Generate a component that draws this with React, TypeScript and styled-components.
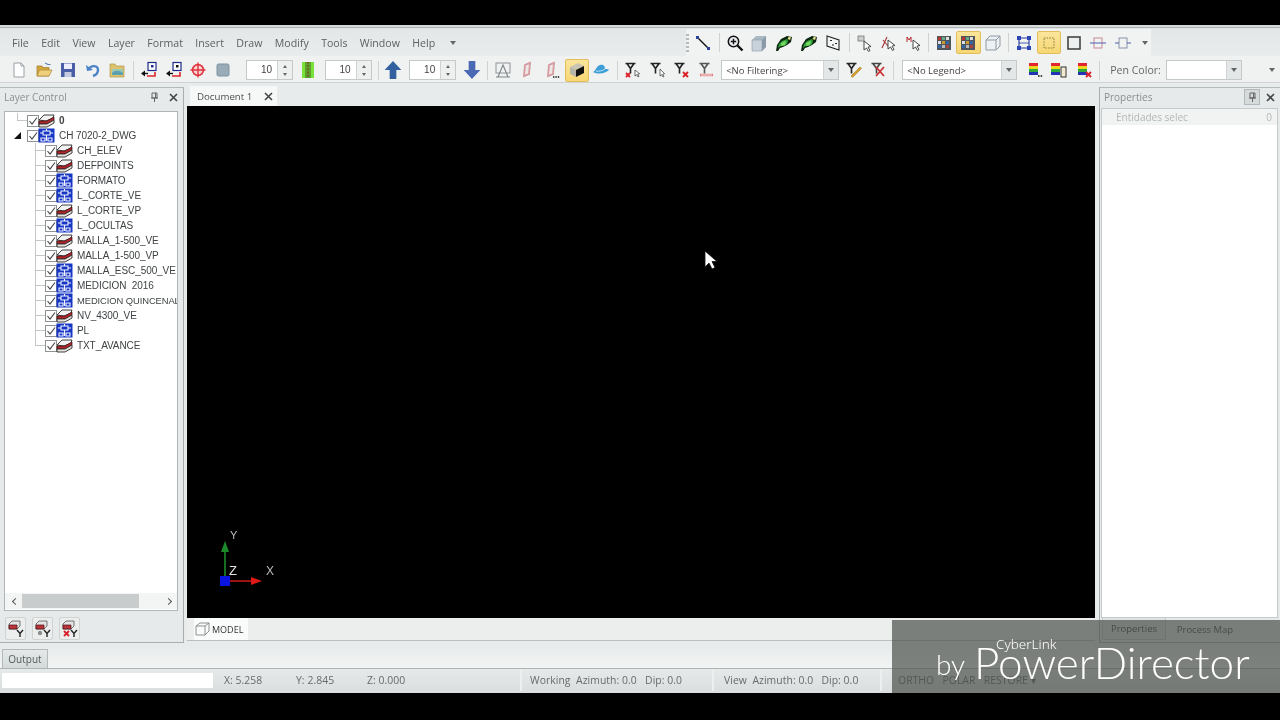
import React from "react";
import styled, { createGlobalStyle } from "styled-components";

const GlobalStyle = createGlobalStyle`
  html, body {
    margin: 0;
    padding: 0;
    background: #000;
    overflow: hidden;
  }
  * { box-sizing: border-box; }
`;

const uiFont = `"Open Sans", "Liberation Sans", sans-serif`;

/* ---------- icons ---------- */

const Svg: React.FC<{ children: React.ReactNode; size?: number }> = ({ children, size = 18 }) => (
  <svg width={size} height={size} viewBox="0 0 18 18" fill="none">
    {children}
  </svg>
);

const LineIcon = () => (
  <Svg>
    <path d="M3 3l12 12" stroke="#111" strokeWidth="1.4" />
    <rect x="2" y="2" width="3" height="3" fill="#2b3f9e" />
    <rect x="13" y="13" width="3" height="3" fill="#2b3f9e" />
  </Svg>
);
const ZoomIcon = () => (
  <Svg>
    <circle cx="7.5" cy="7.5" r="5.2" fill="#e8eef2" stroke="#111" strokeWidth="1.5" />
    <path d="M11.5 11.5l5 5" stroke="#111" strokeWidth="2.4" />
    <path d="M4.8 7.5h5.4M7.5 4.8v5.4" stroke="#111" strokeWidth="1.4" />
  </Svg>
);
const CubeIcon = () => (
  <Svg>
    <path d="M6 2h10v11l-4 4H2V6z" fill="#aab8c4" />
    <path d="M2 6h10v11H2z" fill="#c7d2da" stroke="#8c9aa6" strokeWidth=".6" />
    <path d="M12 6l4-4v11l-4 4z" fill="#8b9aa8" />
  </Svg>
);
const RunnerIcon = () => (
  <Svg>
    <path d="M1 17l1-6 4-6 6-3 5 1-1 5-4 3-4 2-3 1-2 3z" fill="#0c2410" />
    <path d="M3 14l1-4 3-3 5-2 1 2-1 3-3 2-3 0z" fill="#2fa33a" />
    <path d="M6 9l4-2 1 1-1 3-4 1z" fill="#74d85e" />
    <path d="M12.5 5l1.5-2.5 2 1-1 2.5z" fill="#e4e08a" />
  </Svg>
);
const CursorBoxIcon = () => (
  <Svg>
    <path d="M3 2l12 4v10L3 12z" fill="#f4f6f6" stroke="#222" strokeWidth="1.1" />
    <path d="M6 6.5h2M11 9.5h2M8 11h2" stroke="#222" strokeWidth="1.1" />
  </Svg>
);
const GridCursorIcon = () => (
  <Svg>
    <rect x="2" y="2" width="6" height="5" fill="#ccc" stroke="#777" strokeWidth=".8" />
    <path d="M8 7l0 9 2.5-2 2 3.5 1.5-1-2-3.4 3-.6z" fill="#fff" stroke="#333" strokeWidth=".9" />
  </Svg>
);
const SnapCursorIcon = () => (
  <Svg>
    <path d="M2 14L7 3M3 6l5 6" stroke="#a4323a" strokeWidth="1.1" />
    <path d="M8 6l0 9 2.5-2 2 3.5 1.5-1-2-3.4 3-.6z" fill="#fff" stroke="#333" strokeWidth=".9" />
  </Svg>
);
const MarkCursorIcon = () => (
  <Svg>
    <path d="M2 8V3l2 3 2-3v5" stroke="#b3262f" strokeWidth="1" />
    <path d="M8 6l0 9 2.5-2 2 3.5 1.5-1-2-3.4 3-.6z" fill="#fff" stroke="#333" strokeWidth=".9" />
  </Svg>
);
const PaletteIcon = () => (
  <Svg>
    <rect x="2" y="2" width="14" height="14" fill="#50555a" />
    <rect x="3" y="3" width="3" height="3" fill="#b33" />
    <rect x="7" y="3" width="3" height="3" fill="#6a8" />
    <rect x="11" y="3" width="3" height="3" fill="#ddd" />
    <rect x="3" y="7" width="3" height="3" fill="#ddd" />
    <rect x="7" y="7" width="3" height="3" fill="#c93" />
    <rect x="11" y="7" width="3" height="3" fill="#36a" />
    <rect x="3" y="11" width="3" height="3" fill="#36a" />
    <rect x="7" y="11" width="3" height="3" fill="#bbb" />
    <rect x="11" y="11" width="3" height="3" fill="#a44" />
  </Svg>
);
const WireCubeIcon = () => (
  <Svg>
    <path d="M2 6h10v10H2zM2 6l4-4h10v10l-4 4M12 6l4-4" stroke="#8d9aa6" strokeWidth="1" fill="#edf1f3" />
  </Svg>
);
const HandlesIcon = () => (
  <Svg>
    <path d="M4 4h10v10H4z" stroke="#26389a" strokeWidth="1.1" />
    <path d="M4 9h10" stroke="#26389a" strokeWidth=".8" />
    <rect x="2" y="2" width="4" height="4" fill="#2c44b8" />
    <rect x="12" y="2" width="4" height="4" fill="#2c44b8" />
    <rect x="2" y="12" width="4" height="4" fill="#2c44b8" />
    <rect x="12" y="12" width="4" height="4" fill="#2c44b8" />
  </Svg>
);
const DashSquareIcon = () => (
  <Svg>
    <rect x="4" y="4" width="10" height="10" stroke="#8a7a40" strokeDasharray="1.5 1.2" />
  </Svg>
);
const ThickSquareIcon = () => (
  <Svg>
    <rect x="3" y="3" width="12" height="12" fill="#edf0f0" stroke="#444" strokeWidth="1.6" />
  </Svg>
);
const LineRectIcon = () => (
  <Svg>
    <rect x="5" y="4" width="8" height="10" stroke="#c0808a" strokeWidth=".9" />
    <path d="M1 9h16" stroke="#4a5cb0" strokeWidth="1" />
  </Svg>
);
const SmallRectIcon = () => (
  <Svg>
    <rect x="5" y="4" width="8" height="10" stroke="#8893a8" strokeWidth="1" />
    <path d="M1 9h4M13 9h4" stroke="#4a5cb0" strokeWidth="1" />
  </Svg>
);
const NewIcon = () => (
  <Svg>
    <path d="M4 2h7l3 3v11H4z" fill="#fff" stroke="#9aa0a6" />
    <path d="M11 2v3h3" stroke="#9aa0a6" />
  </Svg>
);
const OpenIcon = () => (
  <Svg>
    <path d="M2 5h5l1 1.5h6V15H2z" fill="#d6a63e" stroke="#9c7826" strokeWidth=".7" />
    <path d="M2 15l2.5-6H17l-3 6z" fill="#efcf7c" stroke="#a98630" strokeWidth=".7" />
    <path d="M10 2l3 1.5 2.5 0" stroke="#5c7db8" strokeWidth="1.1" />
  </Svg>
);
const SaveIcon = () => (
  <Svg>
    <path d="M2 2h14v14H2z" fill="#4a5ea8" />
    <rect x="5" y="2.5" width="8" height="5.5" fill="#eef" />
    <rect x="5.5" y="11" width="7" height="5" fill="#c4cbe0" />
  </Svg>
);
const UndoIcon = () => (
  <Svg>
    <path d="M5 8c2-4 9-4 9 1 0 3-2 5-5 6" stroke="#4c83c6" strokeWidth="2.4" />
    <path d="M2 4l1 6 6-1z" fill="#4c83c6" />
  </Svg>
);
const LandscapeFolderIcon = () => (
  <Svg>
    <path d="M2 3h5l1 2h8v11H2z" fill="#dcc26a" stroke="#b09a4e" strokeWidth=".7" />
    <path d="M4 8h11v6H4z" fill="#9cc9b6" />
    <path d="M4 12c3-3 7-3 11 0v2H4z" fill="#5aa0b0" />
  </Svg>
);
const InsertIcon: React.FC<{ dark?: boolean }> = ({ dark }) => (
  <Svg>
    <rect x="8" y="1.5" width="8" height="8" fill="#fff" stroke="#1d2a88" strokeWidth="1.2" />
    <rect x="11" y="4" width="2.5" height="2.5" fill={dark ? "#111" : "#1d2a88"} />
    <path d="M7 15h8v-4" stroke="#e0242a" strokeWidth="1.6" />
    <path d="M1 12.5l4-3v6z" fill="#111" />
    <path d="M5 12.5h3" stroke="#111" strokeWidth="1.4" />
  </Svg>
);
const TargetIcon = () => (
  <Svg>
    <circle cx="9" cy="9" r="5.4" stroke="#e0343c" strokeWidth="1.6" fill="#f9d6d6" />
    <path d="M1.5 9h15M9 1.5v15" stroke="#e0343c" strokeWidth="1.4" />
  </Svg>
);
const GraySquareIcon = () => (
  <Svg>
    <rect x="3" y="3" width="12" height="12" rx="1.5" fill="#9aabb8" stroke="#7d93a2" />
  </Svg>
);
const GreenBarIcon = () => (
  <Svg>
    <rect x="3" y="1" width="12" height="16" fill="#7ce03a" />
    <rect x="6" y="1" width="6" height="16" fill="#5aa02c" />
    <path d="M9 1v16" stroke="#8a3020" strokeWidth="1.2" strokeDasharray="1.6 1.6" />
  </Svg>
);
const UpArrowIcon = () => (
  <Svg size={20}>
    <path d="M9 1l7.5 8H12v8H6V9H1.5z" fill="#33609e" />
  </Svg>
);
const DownArrowIcon = () => (
  <Svg size={20}>
    <path d="M9 17l7.5-8H12V1H6v8H1.5z" fill="#4a68b4" />
  </Svg>
);
const TextFrameIcon = () => (
  <Svg>
    <rect x="2" y="2" width="14" height="10" fill="#f0f2f2" stroke="#8e9498" />
    <path d="M4 16L9 4l5 12M2 16h14" stroke="#7e8488" strokeWidth="1.1" />
  </Svg>
);
const PlateIcon: React.FC<{ dots?: boolean }> = ({ dots }) => (
  <Svg>
    <path d="M5 15l1-11 5-2-1 11z" stroke="#d49aa2" strokeWidth="1.8" fill="#f1e6e6" />
    {dots && <path d="M10 16h1.4M12.4 16h1.4M14.8 16h1.4" stroke="#111" strokeWidth="1.4" />}
  </Svg>
);
const SolidCubeIcon = () => (
  <Svg>
    <path d="M2 6l8-4 6 3-8 4z" fill="#c9c5b4" />
    <path d="M2 6l6 3v7l-6-3z" fill="#b7b5a8" />
    <path d="M8 9l8-4v7l-8 4z" fill="#111" />
  </Svg>
);
const HatIcon = () => (
  <Svg>
    <path d="M1 11c3-1 3-6 7-7 4-1 5 2 5 4 2 0 4 0 4 1-3 3-10 5-16 2z" fill="#3e9ed8" />
    <path d="M4 10c3 .5 6 0 9-2" stroke="#bfe2f5" strokeWidth="1" />
  </Svg>
);
const Funnel = ({ color = "#222" }: { color?: string }) => (
  <path d="M1.5 2.5h10M3 2.5l3.5 5v5M10 2.5l-3.5 5" stroke={color} strokeWidth="1.6" />
);
const FilterCursorRedIcon = () => (
  <Svg>
    <Funnel />
    <path d="M2 12l4 4M6 12l-4 4" stroke="#d92028" strokeWidth="1.8" />
    <path d="M11 9l0 6 1.7-1.3 1.3 2.3 1-.6-1.4-2.3 2-.4z" fill="#fff" stroke="#333" strokeWidth=".7" />
  </Svg>
);
const FilterCursorIcon = () => (
  <Svg>
    <Funnel />
    <path d="M11 8l0 7 1.7-1.3 1.3 2.3 1-.6-1.4-2.3 2-.4z" fill="#fff" stroke="#333" strokeWidth=".7" />
  </Svg>
);
const FilterRedXIcon = () => (
  <Svg>
    <Funnel />
    <path d="M10 11l5 5M15 11l-5 5" stroke="#d92028" strokeWidth="1.9" />
  </Svg>
);
const FilterLinkIcon = () => (
  <Svg>
    <Funnel color="#555" />
    <path d="M2 14h13" stroke="#d77" strokeWidth="2.4" />
    <path d="M3 14h11" stroke="#fff" strokeWidth=".8" />
  </Svg>
);
const FilterPencilIcon = () => (
  <Svg>
    <Funnel />
    <path d="M6 15l9-9 1.5 1.5-9 9z" fill="#d9a22a" stroke="#8c6410" strokeWidth=".5" />
  </Svg>
);
const FilterCrossIcon = () => (
  <Svg>
    <Funnel color="#444" />
    <path d="M6 6l8 9M14 6l-8 9" stroke="#cc3030" strokeWidth="1.8" />
  </Svg>
);
const LegendIcon: React.FC<{ end?: "dots" | "x" | "doc" }> = ({ end }) => (
  <Svg>
    <rect x={end === "doc" ? 1 : 3} y="2" width="9" height="3" fill="#e0262c" />
    <rect x={end === "doc" ? 1 : 3} y="5" width="9" height="3" fill="#ecd81c" />
    <rect x={end === "doc" ? 1 : 3} y="8" width="9" height="3" fill="#2fa83a" />
    <rect x={end === "doc" ? 1 : 3} y="11" width="9" height="3" fill="#2233b4" />
    {end === "dots" && <path d="M12 15h1.6M14.6 15h1.6" stroke="#111" strokeWidth="1.6" />}
    {end === "x" && <path d="M11 11l5 5M16 11l-5 5" stroke="#d92028" strokeWidth="1.8" />}
    {end === "doc" && <rect x="11" y="6" width="5" height="10" fill="#f1ecd0" stroke="#333" />}
  </Svg>
);
const GripDots = styled.span`
  width: 3px;
  height: 18px;
  margin-right: 2px;
  background: repeating-linear-gradient(to bottom, #b4b9b9 0 2px, transparent 2px 4px);
`;

const LayerIcon = () => (
  <svg width="18" height="15" viewBox="0 0 18 15" fill="none">
    <path d="M1 7l5-5h10l-1 3-7 3z" fill="#f2f2f2" stroke="#2a2a2a" strokeWidth=".9" />
    <path d="M1 8h8l7-4v3l-7 4H1z" fill="#b3262c" stroke="#3a0f10" strokeWidth=".7" />
    <path d="M1 11h8l7-4v3l-7 4H1z" fill="#e8e4e0" stroke="#2a2a2a" strokeWidth=".9" />
  </svg>
);
const BlockIcon = () => (
  <svg width="17" height="15" viewBox="0 0 17 15" fill="none">
    <rect x=".5" y=".5" width="16" height="14" fill="#1736c4" />
    <path d="M5 3h7v4H5zM8.5 1v2M8.5 7v6M3 10h4v3H3zM10 10h4v3h-4zM2 5h3M12 5h3" stroke="#f2f5ff" strokeWidth="1.1" />
  </svg>
);
const LayerFilterIcon: React.FC<{ mark?: "eye" | "x" }> = ({ mark }) => (
  <svg width="18" height="18" viewBox="0 0 18 18" fill="none">
    <path d="M2 4l3-3h8v5l-3 3H2z" fill="#e4e4e4" stroke="#555" strokeWidth=".8" />
    <path d="M2 5h8v4H2z" fill="#b8343a" stroke="#4a1214" strokeWidth=".7" />
    {mark === "eye" && <circle cx="6" cy="13" r="2.2" fill="#8a9090" />}
    {mark === "x" && <path d="M3 11l5 5M8 11l-5 5" stroke="#d92028" strokeWidth="1.8" />}
    <path d="M10 10l3 3.5 3-3.5M13 13.5V17" stroke="#222" strokeWidth="1.4" />
  </svg>
);
const ModelCubeIcon = () => (
  <svg width="16" height="14" viewBox="0 0 16 14" fill="none">
    <path d="M1 4h9v9H1zM1 4l4-3h9v8l-4 4M10 4l4-3" stroke="#777" strokeWidth=".8" />
  </svg>
);
const PinIcon = () => (
  <svg width="9" height="10" viewBox="0 0 9 10" fill="none">
    <path d="M2 1h5v5H2zM1 6h7M4.5 6v4M5.5 1v5" stroke="#666" strokeWidth="1" />
  </svg>
);
const CloseIcon = () => (
  <svg width="9" height="9" viewBox="0 0 9 9" fill="none">
    <path d="M1 1l7 7M8 1L1 8" stroke="#444" strokeWidth="1.6" />
  </svg>
);
const DownCaret = styled.span<{ $left?: number }>`
  flex: none;
  width: 0;
  height: 0;
  margin-left: ${(p) => p.$left ?? 0}px;
  border-left: 3.5px solid transparent;
  border-right: 3.5px solid transparent;
  border-top: 4px solid #666;
`;

/* ---------- layout ---------- */

const Page = styled.div`
  position: relative;
  width: 1280px;
  height: 720px;
  background: #000;
  padding-top: 25px;
  font-family: ${uiFont};
  overflow: hidden;
  filter: blur(0.3px);
`;

const Shell = styled.div`
  width: 1280px;
  height: 668px;
  display: flex;
  flex-direction: column;
  background: #e8ebeb;
`;

const TopEdge = styled.div`
  height: 4px;
  background: linear-gradient(#d7dada 0 60%, #aeb3b3 60% 80%, #dfe3e3 80%);
`;

const MenuRow = styled.div`
  height: 27px;
  display: flex;
  background: linear-gradient(#e3e7e7, #e9ecec);
`;

const MenuList = styled.nav`
  width: 686px;
  display: flex;
  align-items: center;
  gap: 12.4px;
  padding-left: 12px;
  font-size: 10.6px;
  color: #5c6162;
`;

const ToolGroup = styled.div`
  width: 465px;
  display: flex;
  align-items: center;
  background: #f1f3f3;
`;

const ToolRow = styled.div`
  height: 27px;
  display: flex;
  align-items: center;
  padding: 2px 0 0 6.7px;
  background: #f0f2f2;
  border-bottom: 1px solid #cfd3d3;
`;

const ToolBtn = styled.span<{ $active?: boolean; $left?: number }>`
  flex: none;
  width: 24.6px;
  height: 23px;
  margin-left: ${(p) => p.$left ?? 0}px;
  display: flex;
  align-items: center;
  justify-content: center;
  border-radius: 2px;
  ${(p) =>
    p.$active &&
    `
    background: linear-gradient(#fbe59a, #f7d774);
    border: 1px solid #e2bd5c;
  `}
`;

const Sep = styled.span<{ $space?: number; $right?: number }>`
  flex: none;
  width: 1px;
  height: 19px;
  margin-left: ${(p) => p.$space ?? 3}px;
  margin-right: ${(p) => p.$right ?? p.$space ?? 3}px;
  background: #cdd2d2;
`;

const Spinner = styled.div<{ $left: number }>`
  flex: none;
  width: 47px;
  height: 20px;
  margin-left: ${(p) => p.$left}px;
  display: flex;
  background: #fff;
  border: 1px solid #c4c9c9;
`;

const SpinValue = styled.span`
  flex: 1;
  text-align: right;
  padding-right: 5px;
  font-family: "Liberation Sans", sans-serif;
  font-size: 10px;
  line-height: 18px;
  color: #444;
`;

const SpinArrows = styled.span`
  width: 15px;
  display: flex;
  flex-direction: column;
  align-items: center;
  justify-content: center;
  gap: 5px;
  background: #eef0f0;
  border-left: 1px solid #cfd3d3;
`;

const Tick = styled.span<{ $up?: boolean }>`
  width: 0;
  height: 0;
  border-left: 2.5px solid transparent;
  border-right: 2.5px solid transparent;
  ${(p) => (p.$up ? "border-bottom: 3px solid #666;" : "border-top: 3px solid #666;")}
`;

const Combo = styled.div<{ $width: number; $left: number }>`
  flex: none;
  width: ${(p) => p.$width}px;
  height: 20px;
  margin-left: ${(p) => p.$left}px;
  display: flex;
  align-items: center;
  background: #fff;
  border: 1px solid #c4c9c9;
  font-size: 9.5px;
  color: #444;
`;

const ComboText = styled.span`
  flex: 1;
  padding-left: 4px;
  white-space: nowrap;
`;

const ComboArrow = styled.span`
  width: 15px;
  height: 18px;
  display: flex;
  align-items: center;
  justify-content: center;
  background: #e4e7e7;
  border-left: 1px solid #d0d4d4;
`;

const PenLabel = styled.span`
  margin-left: 7px;
  width: 56px;
  flex: none;
  font-size: 10.6px;
  color: #666;
  white-space: nowrap;
`;

const Main = styled.div`
  height: 561px;
  display: flex;
`;

const LeftDock = styled.aside`
  width: 184px;
  margin-top: 4px;
  margin-bottom: 1px;
  display: flex;
  flex-direction: column;
  background: #e7eaea;
  border-top: 1px solid #b4b9b9;
  border-right: 1px solid #a9afaf;
  border-bottom: 1px solid #a9afaf;
`;

const DockHeader = styled.header<{ $height: number; $lift: number }>`
  height: ${(p) => p.$height}px;
  flex: none;
  display: flex;
  align-items: center;
  padding-left: 4px;
  padding-bottom: ${(p) => p.$lift}px;
  font-size: 10px;
  color: #8a8f90;
`;

const DockTitle = styled.span`
  flex: 1;
`;

const DockBtn = styled.span<{ $boxed?: boolean; $width?: number }>`
  width: ${(p) => p.$width ?? 18}px;
  height: 16px;
  display: flex;
  align-items: center;
  justify-content: center;
  ${(p) => p.$boxed && "background: #d5dadb; border: 1px solid #b3b9ba;"}
`;

const TreeFrame = styled.div`
  width: 174px;
  height: 500px;
  margin-left: 4px;
  display: flex;
  flex-direction: column;
  background: #fff;
  border: 1px solid #b0b5b5;
`;

const TreeList = styled.ul`
  flex: 1;
  margin: 0;
  padding: 1px 0 0;
  list-style: none;
  overflow: hidden;
`;

const TreeRow = styled.li<{ $depth: number }>`
  height: 15px;
  display: flex;
  align-items: center;
  padding-left: ${(p) => (p.$depth ? 30 : 12)}px;
  white-space: pre;
`;

const Elbow = styled.span<{ $last?: boolean }>`
  flex: none;
  width: 10px;
  height: 15px;
  background:
    linear-gradient(#c4c7c7, #c4c7c7) left top / 1px ${(p) => (p.$last ? "8px" : "15px")} no-repeat,
    linear-gradient(#c4c7c7, #c4c7c7) left 7px / 10px 1px no-repeat;
`;

const Expander = styled.span`
  flex: none;
  width: 10px;
  height: 15px;
  display: flex;
  align-items: center;
  &::before {
    content: "";
    width: 0;
    height: 0;
    margin-left: -3px;
    border-left: 7px solid transparent;
    border-bottom: 7px solid #111;
  }
`;

const Check = styled.span`
  flex: none;
  width: 12px;
  height: 12px;
  display: flex;
  background: #fff;
  border: 1px solid #8d9294;
`;

const TreeIconBox = styled.span`
  flex: none;
  width: 20px;
  margin-left: -1px;
  margin-right: 1px;
  display: flex;
  align-items: center;
`;

const TreeLabel = styled.span<{ $bold?: boolean; $tight?: boolean }>`
  font-family: "Liberation Sans", sans-serif;
  font-size: ${(p) => (p.$tight ? 9.4 : 10)}px;
  letter-spacing: -0.08px;
  font-weight: ${(p) => (p.$bold ? 700 : 400)};
  color: #3f4345;
`;

const HScroll = styled.div`
  height: 16px;
  flex: none;
  margin-bottom: 1px;
  display: flex;
  align-items: center;
  padding: 0 6px 0 8px;
  background: #f3f4f4;
`;

const ScrollThumb = styled.span`
  width: 117px;
  height: 14px;
  margin: 0 auto 0 4px;
  background: #c9cccc;
`;

const ScrollEnd = styled.span<{ $dir: "l" | "r" }>`
  width: 5px;
  height: 5px;
  border-left: 1.5px solid #555;
  border-bottom: 1.5px solid #555;
  transform: rotate(${(p) => (p.$dir === "l" ? 45 : -135)}deg);
`;

const LayerButtons = styled.div`
  display: flex;
  gap: 6px;
  padding: 6px 0 0 5px;
`;

const LayerBtn = styled.span`
  width: 21px;
  height: 23px;
  display: flex;
  align-items: center;
  justify-content: center;
  background: #eceeee;
  border: 1px solid #cfd3d3;
  border-radius: 2px;
`;

const Center = styled.section`
  width: 908px;
  margin-left: 3px;
  display: flex;
  flex-direction: column;
`;

const DocStrip = styled.div`
  height: 23px;
  padding: 3px 0 0 3px;
  display: flex;
`;

const DocTab = styled.div`
  width: 87px;
  display: flex;
  align-items: center;
  gap: 12px;
  padding-left: 7px;
  background: #f6f7f7;
  font-size: 9.7px;
  color: #4c5052;
`;

const Canvas = styled.div`
  position: relative;
  height: 512px;
  background: #000;
`;

const AxisMark = styled.svg`
  position: absolute;
  left: 28px;
  bottom: 27px;
`;

const Pointer = styled.svg`
  position: absolute;
  left: 517px;
  top: 144px;
`;

const ModelBar = styled.div`
  height: 23px;
  padding-left: 7px;
  display: flex;
  background: #eceeee;
  border-bottom: 1px solid #b9bebe;
`;

const ModelTab = styled.div`
  width: 54px;
  display: flex;
  align-items: center;
  gap: 1px;
  padding-left: 1px;
  background: #fafbfb;
  font-size: 9px;
  color: #333;
`;

const RightDock = styled.aside`
  width: 181px;
  margin-left: 4px;
  margin-top: 4px;
  margin-bottom: 1px;
  display: flex;
  flex-direction: column;
  background: #e7eaea;
  border-top: 1px solid #b4b9b9;
  border-left: 1px solid #a9afaf;
  border-bottom: 1px solid #a9afaf;
`;

const PropFrame = styled.div`
  height: 510px;
  width: 177px;
  margin-left: 1px;
  background: #fff;
  border: 1px solid #c6caca;
`;

const PropRow = styled.div`
  height: 16px;
  display: flex;
  align-items: center;
  justify-content: space-between;
  padding: 0 5px 0 14px;
  background: #f1f2f2;
  font-size: 10px;
  color: #b3b7b7;
`;

const PropTabs = styled.div`
  flex: 1;
  display: flex;
  align-items: flex-start;
  padding-left: 2px;
`;

const PropTab = styled.span<{ $active?: boolean }>`
  height: 22px;
  display: flex;
  align-items: center;
  justify-content: center;
  width: ${(p) => (p.$active ? 64 : 78)}px;
  font-size: 9.5px;
  color: #3a3d3d;
  ${(p) => p.$active && "background: #dfe3e3; border: 1px solid #c4c9c9; border-top: 0;"}
`;

const OutputRow = styled.div`
  height: 25px;
  padding: 5px 0 0 2px;
  display: flex;
  background: linear-gradient(#e6eaea, #f2f4f4);
  border-bottom: 1px solid #aeb4b4;
`;

const OutputTab = styled.div`
  width: 46px;
  display: flex;
  align-items: center;
  justify-content: center;
  background: linear-gradient(#e4e8e8, #d4dadb);
  border: 1px solid #b4baba;
  border-bottom: 0;
  font-size: 10px;
  color: #55595a;
`;

const StatusBar = styled.footer`
  flex: 1;
  display: flex;
  align-items: center;
  padding: 0 0 2px 2px;
  background: linear-gradient(#e6e9e9, #d9dddd);
  font-size: 10.4px;
  letter-spacing: 0.05px;
  color: #666b6c;
`;

const StatusInput = styled.span`
  width: 211px;
  height: 15px;
  background: #fff;
`;

const StatusCell = styled.span<{ $width: number; $pad?: number }>`
  flex: none;
  width: ${(p) => p.$width}px;
  padding-left: ${(p) => p.$pad ?? 0}px;
  white-space: pre;
`;

const StatusDivider = styled.span`
  flex: none;
  align-self: stretch;
  width: 2px;
  background: #eef0f0;
`;

const Watermark = styled.div`
  position: absolute;
  left: 892px;
  top: 620px;
  width: 388px;
  height: 73px;
  background: rgba(76, 80, 74, 0.7);
  color: #fff;
  overflow: hidden;
`;

const WmCyber = styled.span`
  position: absolute;
  left: 104px;
  top: 14px;
  font-family: "Noto Sans", sans-serif;
  font-size: 13.5px;
  line-height: 20px;
  font-weight: 300;
`;

const WmBy = styled.span`
  position: absolute;
  left: 44px;
  top: 24px;
  font-family: Lato, sans-serif;
  font-size: 28px;
  line-height: 40px;
  font-weight: 300;
`;

const WmBrand = styled.span`
  position: absolute;
  left: 82px;
  top: 14px;
  font-family: Lato, sans-serif;
  font-size: 44px;
  line-height: 56px;
  font-weight: 300;
  white-space: nowrap;
`;

/* ---------- data ---------- */

type Layer = { name: string; block?: boolean; tight?: boolean };

const layers: Layer[] = [
  { name: "CH_ELEV" },
  { name: "DEFPOINTS" },
  { name: "FORMATO", block: true },
  { name: "L_CORTE_VE", block: true },
  { name: "L_CORTE_VP" },
  { name: "L_OCULTAS", block: true },
  { name: "MALLA_1-500_VE" },
  { name: "MALLA_1-500_VP" },
  { name: "MALLA_ESC_500_VE", block: true },
  { name: "MEDICION  2016", block: true },
  { name: "MEDICION QUINCENAL", block: true, tight: true },
  { name: "NV_4300_VE" },
  { name: "PL", block: true },
  { name: "TXT_AVANCE" },
];

const menus = ["File", "Edit", "View", "Layer", "Format", "Insert", "Draw", "Modify", "Tools", "Window", "Help"];

const CheckBox = () => (
  <Check>
    <svg width="10" height="10" viewBox="0 0 10 10" fill="none">
      <path d="M1.5 5l2.5 3 5-6.5" stroke="#444" strokeWidth="1.1" />
    </svg>
  </Check>
);

const SpinBox: React.FC<{ left: number }> = ({ left }) => (
  <Spinner $left={left}>
    <SpinValue>10</SpinValue>
    <SpinArrows>
      <Tick $up />
      <Tick />
    </SpinArrows>
  </Spinner>
);

const App: React.FC = () => {
  return (
    <Page>
      <GlobalStyle />
      <Shell>
        <TopEdge />
        <MenuRow>
          <MenuList>
            {menus.map((m) => (
              <span key={m}>{m}</span>
            ))}
            <DownCaret $left={2} />
          </MenuList>
          <ToolGroup>
            <GripDots />
            <ToolBtn><LineIcon /></ToolBtn>
            <Sep />
            <ToolBtn><ZoomIcon /></ToolBtn>
            <ToolBtn><CubeIcon /></ToolBtn>
            <ToolBtn><RunnerIcon /></ToolBtn>
            <ToolBtn><RunnerIcon /></ToolBtn>
            <ToolBtn><CursorBoxIcon /></ToolBtn>
            <Sep />
            <ToolBtn><GridCursorIcon /></ToolBtn>
            <ToolBtn><SnapCursorIcon /></ToolBtn>
            <ToolBtn><MarkCursorIcon /></ToolBtn>
            <Sep $space={2} />
            <ToolBtn><PaletteIcon /></ToolBtn>
            <ToolBtn $active><PaletteIcon /></ToolBtn>
            <ToolBtn><WireCubeIcon /></ToolBtn>
            <Sep />
            <ToolBtn><HandlesIcon /></ToolBtn>
            <ToolBtn $active><DashSquareIcon /></ToolBtn>
            <ToolBtn><ThickSquareIcon /></ToolBtn>
            <ToolBtn><LineRectIcon /></ToolBtn>
            <ToolBtn><SmallRectIcon /></ToolBtn>
            <DownCaret $left={7} />
          </ToolGroup>
        </MenuRow>
        <ToolRow>
          <ToolBtn><NewIcon /></ToolBtn>
          <ToolBtn><OpenIcon /></ToolBtn>
          <ToolBtn><SaveIcon /></ToolBtn>
          <ToolBtn><UndoIcon /></ToolBtn>
          <ToolBtn><LandscapeFolderIcon /></ToolBtn>
          <Sep />
          <ToolBtn><InsertIcon /></ToolBtn>
          <ToolBtn><InsertIcon dark /></ToolBtn>
          <ToolBtn><TargetIcon /></ToolBtn>
          <ToolBtn><GraySquareIcon /></ToolBtn>
          <SpinBox left={11} />
          <ToolBtn $left={3}><GreenBarIcon /></ToolBtn>
          <SpinBox left={4} />
          <Sep $space={6} $right={2} />
          <ToolBtn><UpArrowIcon /></ToolBtn>
          <SpinBox left={4} />
          <ToolBtn $left={3}><DownArrowIcon /></ToolBtn>
          <Sep />
          <ToolBtn><TextFrameIcon /></ToolBtn>
          <ToolBtn><PlateIcon /></ToolBtn>
          <ToolBtn><PlateIcon dots /></ToolBtn>
          <ToolBtn $active><SolidCubeIcon /></ToolBtn>
          <ToolBtn><HatIcon /></ToolBtn>
          <Sep />
          <ToolBtn><FilterCursorRedIcon /></ToolBtn>
          <ToolBtn><FilterCursorIcon /></ToolBtn>
          <ToolBtn><FilterRedXIcon /></ToolBtn>
          <ToolBtn><FilterLinkIcon /></ToolBtn>
          <Combo $width={118} $left={2}>
            <ComboText>&lt;No Filtering&gt;</ComboText>
            <ComboArrow><DownCaret /></ComboArrow>
          </Combo>
          <ToolBtn $left={3}><FilterPencilIcon /></ToolBtn>
          <ToolBtn><FilterCrossIcon /></ToolBtn>
          <Sep $space={2} />
          <Combo $width={115} $left={6}>
            <ComboText>&lt;No Legend&gt;</ComboText>
            <ComboArrow><DownCaret /></ComboArrow>
          </Combo>
          <ToolBtn $left={5}><LegendIcon end="dots" /></ToolBtn>
          <ToolBtn><LegendIcon end="doc" /></ToolBtn>
          <ToolBtn><LegendIcon end="x" /></ToolBtn>
          <Sep />
          <PenLabel>Pen Color:</PenLabel>
          <Combo $width={76} $left={0}>
            <ComboText />
            <ComboArrow><DownCaret /></ComboArrow>
          </Combo>
          <DownCaret $left={27} />
        </ToolRow>
        <Main>
          <LeftDock>
            <DockHeader $height={23} $lift={5}>
              <DockTitle>Layer Control</DockTitle>
              <DockBtn><PinIcon /></DockBtn>
              <DockBtn $width={20}><CloseIcon /></DockBtn>
            </DockHeader>
            <TreeFrame>
              <TreeList>
                <TreeRow $depth={0}>
                  <Elbow $last />
                  <CheckBox />
                  <TreeIconBox><LayerIcon /></TreeIconBox>
                  <TreeLabel $bold>0</TreeLabel>
                </TreeRow>
                <TreeRow $depth={0}>
                  <Expander />
                  <CheckBox />
                  <TreeIconBox><BlockIcon /></TreeIconBox>
                  <TreeLabel>CH 7020-2_DWG</TreeLabel>
                </TreeRow>
                {layers.map((l, i) => (
                  <TreeRow key={l.name} $depth={1}>
                    <Elbow $last={i === layers.length - 1} />
                    <CheckBox />
                    <TreeIconBox>{l.block ? <BlockIcon /> : <LayerIcon />}</TreeIconBox>
                    <TreeLabel $tight={l.tight}>{l.name}</TreeLabel>
                  </TreeRow>
                ))}
              </TreeList>
              <HScroll>
                <ScrollEnd $dir="l" />
                <ScrollThumb />
                <ScrollEnd $dir="r" />
              </HScroll>
            </TreeFrame>
            <LayerButtons>
              <LayerBtn><LayerFilterIcon /></LayerBtn>
              <LayerBtn><LayerFilterIcon mark="eye" /></LayerBtn>
              <LayerBtn><LayerFilterIcon mark="x" /></LayerBtn>
            </LayerButtons>
          </LeftDock>
          <Center>
            <DocStrip>
              <DocTab>
                Document 1
                <CloseIcon />
              </DocTab>
            </DocStrip>
            <Canvas>
              <AxisMark width="70" height="62" viewBox="0 0 70 62" fill="none">
                <path d="M10 50V20" stroke="#1c8a2a" strokeWidth="1.6" />
                <path d="M10 12l-4 11h8z" fill="#1c8a2a" />
                <path d="M10 52h28" stroke="#c01818" strokeWidth="1.6" />
                <path d="M47 52l-11-4v8z" fill="#e01818" />
                <rect x="5" y="47" width="10" height="10" fill="#0a14e0" />
                <text x="15" y="10" fill="#bbb" fontFamily="Liberation Sans" fontSize="11">Y</text>
                <text x="14" y="46" fill="#e4e4e4" fontFamily="Liberation Sans" fontSize="13">Z</text>
                <text x="51" y="46" fill="#bbb" fontFamily="Liberation Sans" fontSize="12">X</text>
              </AxisMark>
              <Pointer width="14" height="20" viewBox="0 0 14 20">
                <path d="M1 1v16l4-4 3 6 3-1.5-3-6h5z" fill="#fff" stroke="#111" strokeWidth=".8" />
              </Pointer>
            </Canvas>
            <ModelBar>
              <ModelTab>
                <ModelCubeIcon />
                MODEL
              </ModelTab>
            </ModelBar>
          </Center>
          <RightDock>
            <DockHeader $height={20} $lift={2}>
              <DockTitle>Properties</DockTitle>
              <DockBtn $boxed $width={16}><PinIcon /></DockBtn>
              <DockBtn $width={20}><CloseIcon /></DockBtn>
            </DockHeader>
            <PropFrame>
              <PropRow>
                <span>Entidades selec</span>
                <span>0</span>
              </PropRow>
            </PropFrame>
            <PropTabs>
              <PropTab $active>Properties</PropTab>
              <PropTab>Process Map</PropTab>
            </PropTabs>
          </RightDock>
        </Main>
        <OutputRow>
          <OutputTab>Output</OutputTab>
        </OutputRow>
        <StatusBar>
          <StatusInput />
          <StatusCell $width={83} $pad={11}>X: 5.258</StatusCell>
          <StatusCell $width={71}>Y: 2.845</StatusCell>
          <StatusCell $width={153}>Z: 0.000</StatusCell>
          <StatusDivider />
          <StatusCell $width={190} $pad={8}>Working  Azimuth: 0.0   Dip: 0.0</StatusCell>
          <StatusDivider />
          <StatusCell $width={166} $pad={10}>View  Azimuth: 0.0   Dip: 0.0</StatusCell>
          <StatusDivider />
          <StatusCell $width={190} $pad={16}>ORTHO   POLAR   RESTORE ▾</StatusCell>
        </StatusBar>
      </Shell>
      <Watermark>
        <WmCyber>CyberLink</WmCyber>
        <WmBy>by</WmBy>
        <WmBrand>PowerDirector</WmBrand>
      </Watermark>
    </Page>
  );
};

export default App;
